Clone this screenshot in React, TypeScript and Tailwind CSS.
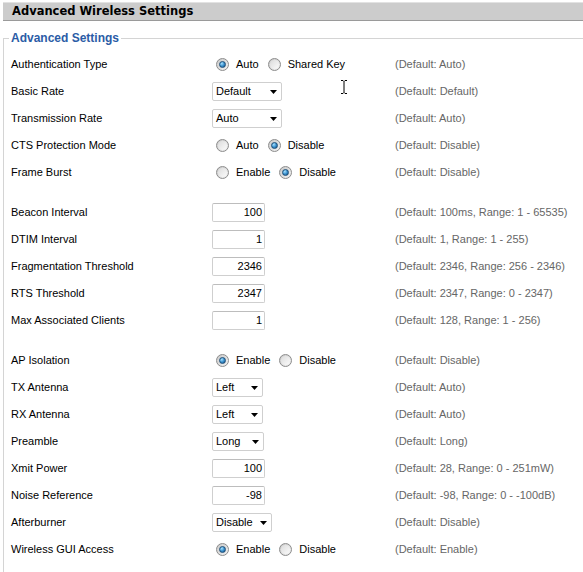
import React from "react";

type Opt = { label: string; checked?: boolean };
type Control =
  | { kind: "radio"; options: Opt[] }
  | { kind: "select"; value: string; width: number }
  | { kind: "input"; value: string };
type Row = { label: string; control: Control; def: string } | { spacer: true };

const rows: Row[] = [
  { label: "Authentication Type", control: { kind: "radio", options: [{ label: "Auto", checked: true }, { label: "Shared Key" }] }, def: "(Default: Auto)" },
  { label: "Basic Rate", control: { kind: "select", value: "Default", width: 70 }, def: "(Default: Default)" },
  { label: "Transmission Rate", control: { kind: "select", value: "Auto", width: 70 }, def: "(Default: Auto)" },
  { label: "CTS Protection Mode", control: { kind: "radio", options: [{ label: "Auto" }, { label: "Disable", checked: true }] }, def: "(Default: Disable)" },
  { label: "Frame Burst", control: { kind: "radio", options: [{ label: "Enable" }, { label: "Disable", checked: true }] }, def: "(Default: Disable)" },
  { spacer: true },
  { label: "Beacon Interval", control: { kind: "input", value: "100" }, def: "(Default: 100ms, Range: 1 - 65535)" },
  { label: "DTIM Interval", control: { kind: "input", value: "1" }, def: "(Default: 1, Range: 1 - 255)" },
  { label: "Fragmentation Threshold", control: { kind: "input", value: "2346" }, def: "(Default: 2346, Range: 256 - 2346)" },
  { label: "RTS Threshold", control: { kind: "input", value: "2347" }, def: "(Default: 2347, Range: 0 - 2347)" },
  { label: "Max Associated Clients", control: { kind: "input", value: "1" }, def: "(Default: 128, Range: 1 - 256)" },
  { spacer: true },
  { label: "AP Isolation", control: { kind: "radio", options: [{ label: "Enable", checked: true }, { label: "Disable" }] }, def: "(Default: Disable)" },
  { label: "TX Antenna", control: { kind: "select", value: "Left", width: 51 }, def: "(Default: Auto)" },
  { label: "RX Antenna", control: { kind: "select", value: "Left", width: 51 }, def: "(Default: Auto)" },
  { label: "Preamble", control: { kind: "select", value: "Long", width: 52 }, def: "(Default: Long)" },
  { label: "Xmit Power", control: { kind: "input", value: "100" }, def: "(Default: 28, Range: 0 - 251mW)" },
  { label: "Noise Reference", control: { kind: "input", value: "-98" }, def: "(Default: -98, Range: 0 - -100dB)" },
  { label: "Afterburner", control: { kind: "select", value: "Disable", width: 60 }, def: "(Default: Disable)" },
  { label: "Wireless GUI Access", control: { kind: "radio", options: [{ label: "Enable", checked: true }, { label: "Disable" }] }, def: "(Default: Enable)" },
];

function Radio({ checked }: { checked?: boolean }) {
  return (
    <span className="flex h-[13px] w-[13px] shrink-0 items-center justify-center rounded-full border border-[#8c8c8c] bg-linear-to-br from-[#c9c9c9] to-[#f4f4f4]">
      {checked ? (
        <span className="h-[7px] w-[7px] rounded-full border border-[#1d4f7a] bg-radial-[at_35%_30%] from-[#a8e2ff] via-[#3b92cf] to-[#114a7c]" />
      ) : (
        <span className="h-[9px] w-[9px] rounded-full bg-linear-to-br from-[#dcdcdc] to-[#fbfbfb]" />
      )}
    </span>
  );
}

function ControlView({ c }: { c: Control }) {
  if (c.kind === "radio") {
    return (
      <div className="flex items-center">
        {c.options.map((o, i) => (
          <div key={i} className={`flex items-center ${i === 0 ? "ml-[4px]" : "ml-[9px]"}`}>
            <Radio checked={o.checked} />
            <span className="ml-[7px]">{o.label}</span>
          </div>
        ))}
      </div>
    );
  }
  if (c.kind === "select") {
    return (
      <div
        className="flex h-[19px] items-center rounded-[2px] border border-[#cfcfcf] bg-white"
        style={{ width: c.width }}
      >
        <span className="flex-1 pl-[3px] leading-none">{c.value}</span>
        <span className="flex w-[16px] items-center justify-center">
          <svg width="7" height="4" viewBox="0 0 7 4">
            <polygon points="0,0 7,0 3.5,4" fill="#000" />
          </svg>
        </span>
      </div>
    );
  }
  return (
    <div className="flex h-[19px] w-[53px] items-center justify-end rounded-[2px] border border-[#cfcfcf] border-t-[#bdbdbd] bg-white pr-[2px]">
      <span className="leading-none">{c.value}</span>
    </div>
  );
}

export default function App() {
  return (
    <div className="relative min-h-[572px] bg-white text-[11px] text-black" style={{ fontFamily: '"Liberation Sans", Arial, sans-serif' }}>
      <div className="ml-[3px] mt-[2px] flex h-[19px] w-[580px] items-center border-t border-t-[#e2e2e2] border-b border-b-[#9a9a9a] bg-[#cccccc] pl-[9px]">
        <span className="text-[11.5px] font-bold leading-none text-black" style={{ fontFamily: '"DejaVu Sans", Verdana, sans-serif' }}>
          Advanced Wireless Settings
        </span>
      </div>

      <fieldset className="ml-[3px] mt-[10px] w-[580px] border-l border-t border-[#d4d4d4] pb-[20px]">
        <legend className="ml-[5px] px-[2px] text-[12px] font-bold leading-[14px] text-[#2b5ca6]">
          Advanced Settings
        </legend>
        <div className="flex flex-col pt-[6px]">
          {rows.map((r, i) =>
            "spacer" in r ? (
              <div key={i} className="h-[13px]" />
            ) : (
              <div key={i} className="flex h-[27px] items-center">
                <div className="w-[208px] shrink-0 pl-[7px]">{r.label}</div>
                <div className="w-[183px] shrink-0">
                  <ControlView c={r.control} />
                </div>
                <div className="text-[#666666]">{r.def}</div>
              </div>
            )
          )}
        </div>
      </fieldset>

      <svg className="absolute left-[340px] top-[77px]" width="8" height="16" viewBox="0 0 8 16">
        <path d="M1 1.5 H3 L4 2.5 L5 1.5 H7 M4 2.5 V13.5 M1 14.5 H3 L4 13.5 L5 14.5 H7" stroke="#000" strokeWidth="1" fill="none" />
      </svg>
    </div>
  );
}
